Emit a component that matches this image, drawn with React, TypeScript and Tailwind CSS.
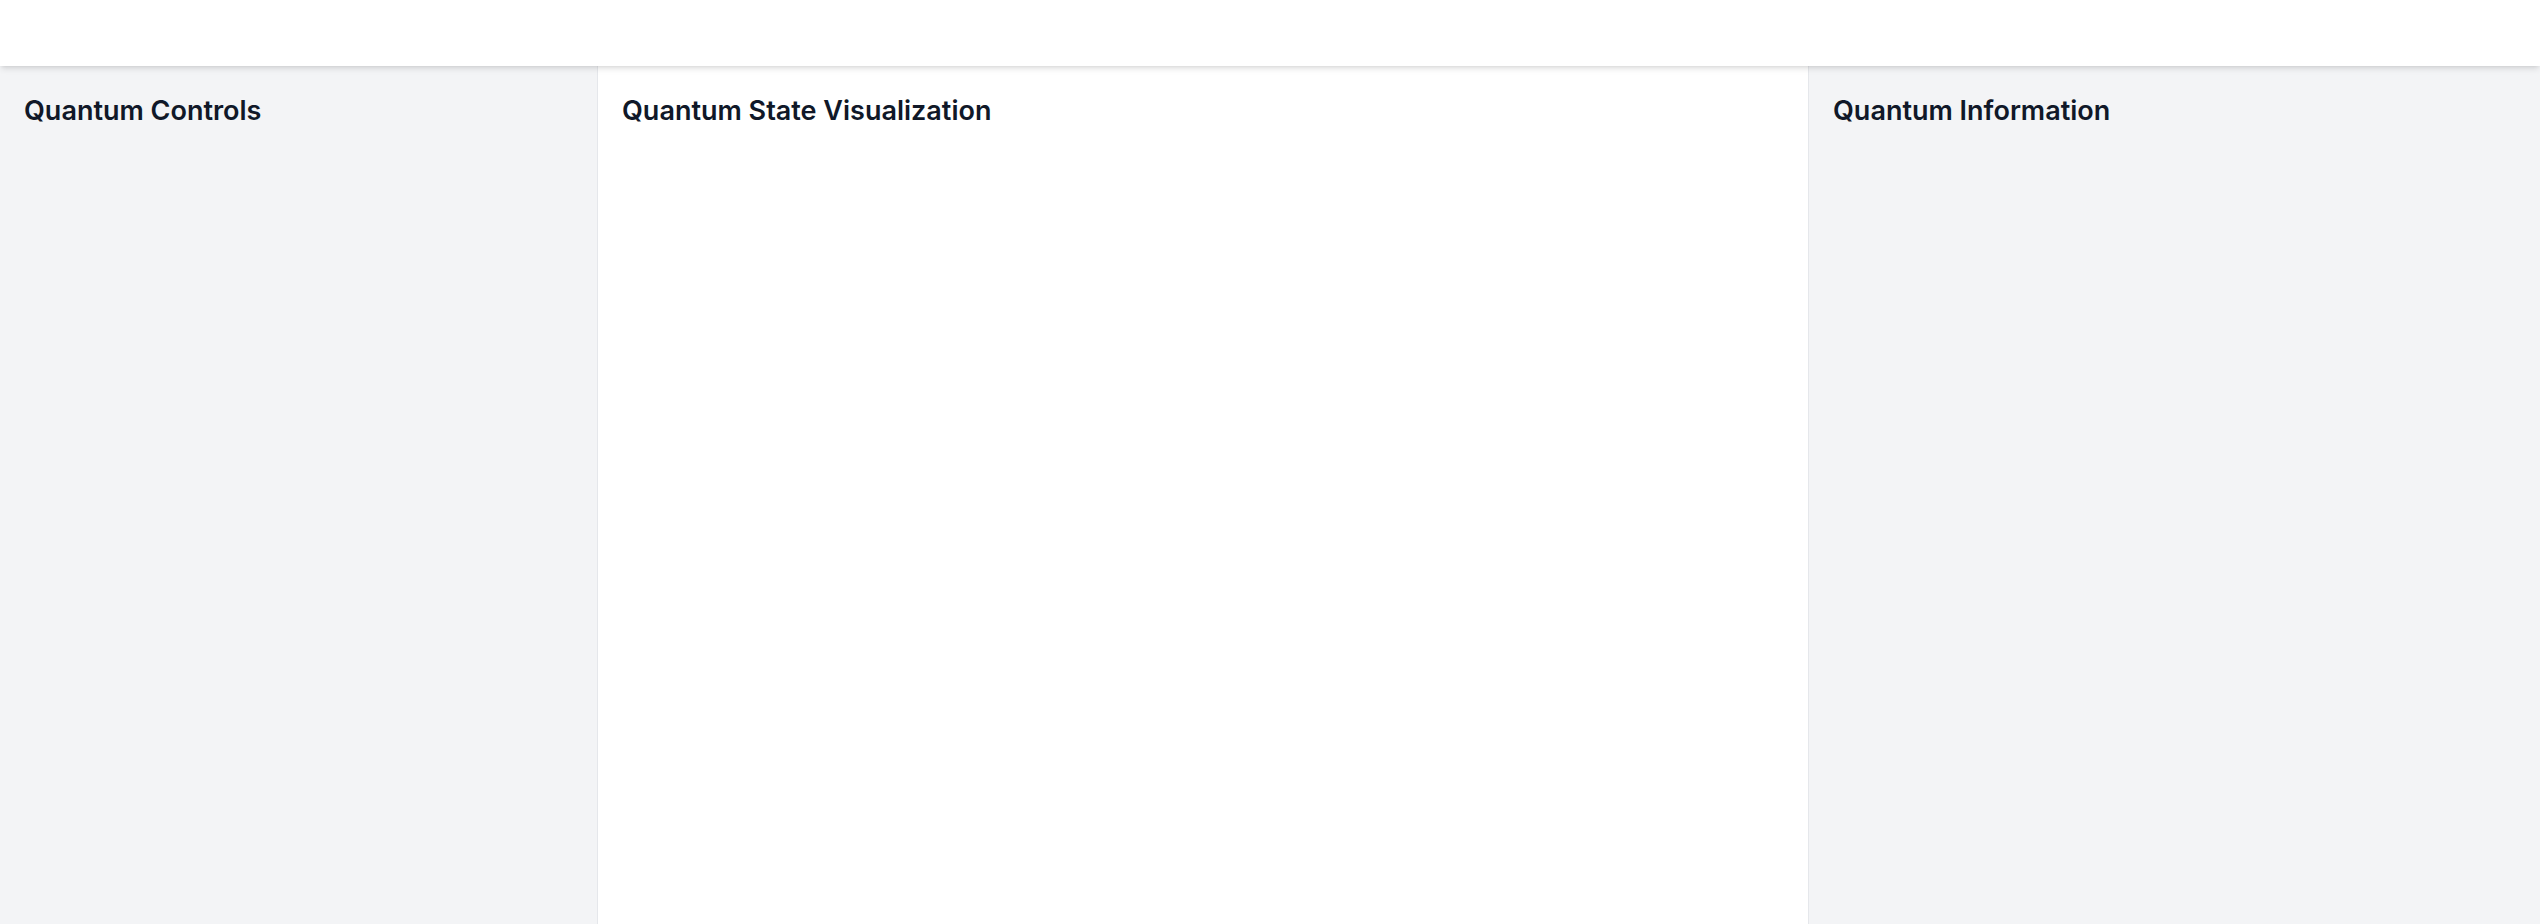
import React from 'react';

const Panel: React.FC<{ title: string; className?: string }> = ({ title, className }) => (
  <section className={`h-full overflow-y-auto px-6 pt-[27px] ${className ?? ''}`}>
    <h2 className="text-[27px] leading-[36px] font-semibold text-gray-900">{title}</h2>
  </section>
);

const App: React.FC = () => {
  return (
    <div className="flex h-screen flex-col bg-white font-['Inter',sans-serif]">
      <header className="relative z-10 h-[66px] shrink-0 bg-white shadow-md" />
      <main className="flex min-h-0 flex-1">
        <Panel title="Quantum Controls" className="w-[598px] shrink-0 border-r border-gray-200 bg-gray-100" />
        <Panel title="Quantum State Visualization" className="flex-1 bg-white" />
        <Panel title="Quantum Information" className="w-[732px] shrink-0 border-l border-gray-200 bg-gray-100" />
      </main>
    </div>
  );
};

export default App;
